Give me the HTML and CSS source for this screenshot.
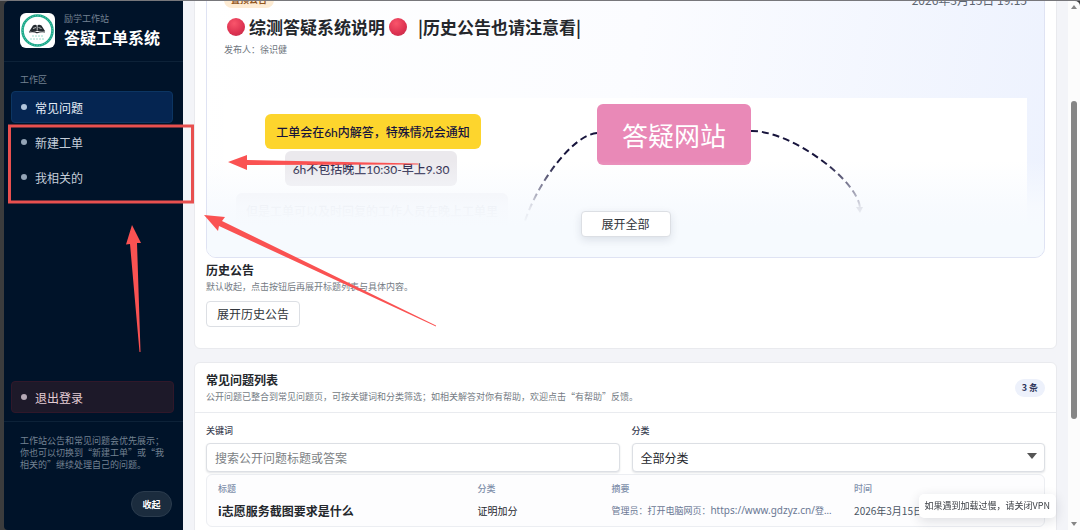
FILE: index.html
```html
<!DOCTYPE html>
<html lang="zh-CN">
<head>
<meta charset="utf-8">
<title>答疑工单系统</title>
<link rel="stylesheet" href="styles.css">
</head>
<body>
<div class="window">
  <aside class="sidebar">
    <header class="brand">
      <svg class="brand-logo" viewBox="0 0 35 35" aria-hidden="true">
        <rect width="35" height="35" rx="6" fill="#fff"/>
        <circle cx="17.5" cy="17.5" r="15" fill="none" stroke="#1ba889" stroke-width="2.6"/>
        <circle cx="17.5" cy="17.5" r="15" fill="none" stroke="#6fcdb8" stroke-width="1" stroke-dasharray="1 1.6"/>
        <path d="M9.500 18l3.500-5.500c1.500-1 3-1 4 0c1-1 3-1 4.500 0l3.500 5.500z" fill="#252b30"/>
        <path d="M17.200 10.500v7M13 15.500l3-1M18.500 14.500l3 1" stroke="#fff" stroke-width=".7"/>
        <path d="M9 19c3-.5 6-.5 8 .8c3-1.300 5-1.300 8-.8" fill="none" stroke="#252b30" stroke-width="1.200"/>
        <path d="M12 23h11M10 26h15" stroke="#9adccc" stroke-width="1" stroke-dasharray="2 1"/>
      </svg>
      <div>
        <p class="brand-sub">励学工作站</p>
        <h1 class="brand-title">答疑工单系统</h1>
      </div>
    </header>
    <p class="nav-caption">工作区</p>
    <nav class="nav">
      <a class="nav-item nav-item-active" href="#faq">常见问题</a>
      <a class="nav-item" href="#new">新建工单</a>
      <a class="nav-item" href="#mine">我相关的</a>
    </nav>
    <button class="nav-item logout" type="button">退出登录</button>
    <footer class="side-foot">
      <p class="side-note">工作站公告和常见问题会优先展示；你也可以切换到“新建工单”或“我相关的”继续处理自己的问题。</p>
      <button class="collapse" type="button">收起</button>
    </footer>
  </aside>

  <main class="main">
    <div class="content">
      <section class="card notices">
        <article class="notice">
          <div class="notice-top">
            <span class="badge">置顶公告</span>
            <time class="notice-time">2026年3月15日 19:15</time>
          </div>
          <h2 class="notice-title"><span class="dot"></span>综测答疑系统说明<span class="dot"></span><span class="title-rest">|历史公告也请注意看|</span></h2>
          <p class="byline">发布人：徐识健</p>
          <div class="map">
            <svg class="map-lines" width="804" height="159" viewBox="224 98 804 159" aria-hidden="true">
              <path d="M597 133C572 135 536 185 524 224"/>
              <path d="M751 131C790 130 858 180 860 208"/>
              <path class="map-tip" d="M856 207l4 6l3-6z"/>
            </svg>
            <span class="node node-yellow">工单会在6h内解答，特殊情况会通知</span>
            <span class="node node-gray">6h不包括晚上10:30-早上9.30</span>
            <span class="node node-faint">但是工单可以及时回复的工作人员在晚上工单里</span>
            <span class="node node-pink">答疑网站</span>
          </div>
          <div class="fade"><button class="btn btn-raised" type="button">展开全部</button></div>
        </article>
        <h3 class="section-title history-title">历史公告</h3>
        <p class="hint">默认收起，点击按钮后再展开标题列表与具体内容。</p>
        <button class="btn btn-history" type="button">展开历史公告</button>
      </section>

      <section class="card" id="faq">
        <header class="card-head">
          <div>
            <h3 class="section-title">常见问题列表</h3>
            <p class="hint">公开问题已整合到常见问题页，可按关键词和分类筛选；如相关解答对你有帮助，欢迎点击“有帮助”反馈。</p>
          </div>
          <span class="count">3 条</span>
        </header>
        <div class="card-body">
          <form class="filters">
            <div class="field">
              <label for="keyword">关键词</label>
              <input class="control" id="keyword" type="text" placeholder="搜索公开问题标题或答案">
            </div>
            <div class="field">
              <label for="category">分类</label>
              <select class="control select" id="category"><option>全部分类</option></select>
              <svg class="caret" width="10" height="6" viewBox="0 0 10 6" aria-hidden="true"><path d="M0 0h10L5 6z" fill="#555"/></svg>
            </div>
          </form>
          <div class="table-box">
            <table class="table">
              <thead>
                <tr><th class="col-title">标题</th><th class="col-cat">分类</th><th class="col-sum">摘要</th><th>时间</th></tr>
              </thead>
              <tbody>
                <tr>
                  <td class="cell-title">i志愿服务截图要求是什么</td>
                  <td>证明加分</td>
                  <td class="cell-sum">管理员：打开电脑网页：<span class="url">https://www.gdzyz.cn/</span>登...</td>
                  <td class="cell-time">2026年3月15日</td>
                </tr>
              </tbody>
            </table>
          </div>
        </div>
      </section>
    </div>
  </main>

  <div class="scrollbar" aria-hidden="true">
    <svg width="6" height="4" viewBox="0 0 6 4"><path d="M3 0l3 4H0z" fill="#858585"/></svg>
    <span class="thumb"></span>
    <svg class="scroll-down" width="6" height="4" viewBox="0 0 6 4"><path d="M0 0h6L3 4z" fill="#858585"/></svg>
  </div>
</div>

<div class="toast" role="status">如果遇到加载过慢，请关闭VPN</div>

<svg class="marks" width="1080" height="530" viewBox="0 0 1080 530" aria-hidden="true">
  <rect x="9.500" y="126" width="183" height="76" fill="none" stroke="#e8504f" stroke-width="3"/>
  <path d="M228 162L247 155V160L418 163.500V164.500L247 165V170z"/>
  <path d="M204 215L225 217L222 221L436 325.500V326.500L219 226L218 231z"/>
  <path d="M132 225L141 243L137 243L140.500 352H139.500L130 244L126 244.500z"/>
</svg>
</body>
</html>
```

FILE: styles.css
```css
* { box-sizing: border-box; }

body, h1, h2, h3, p { margin: 0; }

body {
  height: 100vh;
  overflow: hidden;
  background: #3b3c3d;
  color: #24272c;
  font-family: "Noto Sans CJK SC", "Noto Sans", sans-serif;
  font-size: 12px;
}

button, input, select { font: inherit; color: inherit; }

.window {
  display: flex;
  height: 100vh;
  padding: 1px 0 0 4px;
  background: linear-gradient(#77777b 1px, transparent 1px);
}

/* Sidebar */
.sidebar {
  display: flex;
  flex: none;
  flex-direction: column;
  width: 179px;
  background: #001329;
  border-radius: 5px 0 0 4px;
}

.brand {
  display: flex;
  gap: 9px;
  padding: 11px 16px 12px;
  border-bottom: 1px solid #0d2238;
}

.brand-logo { width: 35px; height: 35px; margin-top: 1px; }
.brand-sub { color: #748292; font-size: 9px; line-height: 14px; }
.brand-title { color: #fff; font-size: 16px; line-height: 23px; }

.nav-caption {
  padding: 11px 16px 4px;
  color: #748292;
  font-size: 9px;
  line-height: 14px;
}

.nav { display: grid; gap: 3px; padding: 0 10px 0 7px; }

.nav-item {
  display: flex;
  align-items: center;
  gap: 8px;
  height: 32px;
  padding: 0 9px;
  border: 1px solid transparent;
  border-radius: 4px;
  color: #c5ced9;
  font-size: 12px;
  text-decoration: none;
}

.nav-item::before {
  width: 6px;
  height: 6px;
  border-radius: 50%;
  background: #93a4b6;
  content: "";
}

.nav-item-active { background: #052551; border-color: #0c3562; color: #e5edf7; }
.nav-item-active::before { background: #b1c5dc; }

.logout {
  margin: auto 9px 8px 7px;
  background: #1d1929;
  border-color: #30182a;
  color: #e3ccd4;
}

.logout::before { background: #b5a8b5; }

.side-foot {
  display: flex;
  flex-direction: column;
  padding: 13px 11px 13px 16px;
  border-top: 1px solid #0d2238;
}

.side-note { max-width: 146px; color: #748292; font-size: 9px; line-height: 12px; }

.collapse {
  align-self: flex-end;
  width: 41px;
  height: 26px;
  margin-top: 20px;
  padding: 0;
  border: 1px solid #2b3c4e;
  border-radius: 13px;
  background: #1b2c3e;
  color: #fff;
  font-size: 9px;
  font-weight: 700;
}

/* Main column */
.main {
  flex: 1;
  min-width: 0;
  overflow: hidden;
  padding: 0 11px;
  background: #f3f4f8;
}

/* The list is scrolled down past its first rows */
.content { display: grid; gap: 13px; margin-top: -40px; }

.card { border: 1px solid #e9eaee; border-radius: 6px; background: #fff; }
.notices { padding: 11px 11px 21px; }

.notice {
  position: relative;
  overflow: hidden;
  padding: 18px 17px 0;
  border: 1px solid #dfe3f3;
  border-radius: 10px;
  background: linear-gradient(100deg, #fff 0%, #fbfcff 50%, #edf2fe 100%);
}

.notice-top { display: flex; justify-content: space-between; line-height: 16px; }

.badge {
  padding: 0 7px;
  border-radius: 8px;
  background: #fdebd3;
  color: #92551c;
  font-size: 9px;
  font-weight: 700;
}

.notice-time { color: #5d6570; font-size: 12px; }

.notice-title {
  display: flex;
  align-items: center;
  gap: 4px;
  margin: 7px 0 4px;
  padding-left: 3px;
  font-size: 17px;
  line-height: 24px;
}

.title-rest { margin-left: 7px; }

.dot {
  width: 18px;
  height: 18px;
  border-radius: 50%;
  background: radial-gradient(circle at 40% 30%, #f9556b, #dc3150 60%, #b9304b);
}

.byline { color: #6c737c; font-size: 9px; line-height: 14px; }

/* Mind map */
.map { position: relative; height: 159px; margin-top: 41px; background: #fff; }
.map-lines { position: absolute; top: 0; left: 0; }

.map-lines path {
  fill: none;
  stroke: #17143c;
  stroke-width: 2;
  stroke-dasharray: 7 4;
}

.map-lines .map-tip { fill: #17143c; stroke: none; }

.node {
  position: absolute;
  display: flex;
  align-items: center;
  justify-content: center;
  height: 35px;
  border-radius: 6px;
  color: #17143c;
  font-family: Lato, "Noto Sans CJK SC", sans-serif;
  font-size: 12px;
  font-weight: 500;
  white-space: nowrap;
}

.node-yellow { top: 16px; left: 41px; width: 216px; background: #fdd52d; }
.node-gray { top: 53px; left: 61px; width: 172px; background: #ebe9ed; }
.node-faint { top: 95px; left: 12px; width: 272px; background: #f1f1f5; color: #b4b6c2; }
.node-pink {
  top: 6px;
  left: 373px;
  width: 154px;
  height: 61px;
  background: #e989b7;
  color: #fff;
  font-size: 26px;
  font-weight: 400;
}

.fade {
  position: absolute;
  right: 0;
  bottom: 0;
  left: 0;
  display: flex;
  align-items: flex-end;
  justify-content: center;
  height: 96px;
  padding-bottom: 20px;
  background: linear-gradient(rgba(247, 250, 254, 0), rgba(247, 250, 254, .9) 48%, #f6fafe 68%);
}

.btn {
  height: 26px;
  padding: 0 10px;
  border: 1px solid #dcdfe4;
  border-radius: 4px;
  background: #fff;
  color: #30343a;
  font-size: 12px;
  line-height: 22px;
}

.btn-raised { min-width: 90px; box-shadow: 0 3px 8px rgba(30, 40, 70, .12); }
.btn-history { margin-top: 7px; }

.section-title { font-size: 12px; line-height: 18px; }
.history-title { margin-top: 3px; }
.hint { margin-top: 1px; color: #747b84; font-size: 9px; line-height: 14px; }

/* Question list */
.card-head {
  display: flex;
  align-items: center;
  justify-content: space-between;
  padding: 8px 11px;
  border-bottom: 1px solid #e9ebef;
}

.count {
  padding: 0 7px;
  border-radius: 9px;
  background: #edf1fb;
  color: #2d3459;
  font-size: 9px;
  font-weight: 700;
  line-height: 18px;
}

.card-body { padding: 11px 11px 20px; }
.filters { display: grid; grid-template-columns: 1fr 1fr; gap: 12px; }
.field { position: relative; }

.field label {
  display: block;
  margin-bottom: 5px;
  color: #3b4252;
  font-size: 9px;
  font-weight: 500;
  line-height: 14px;
}

.control {
  display: block;
  width: 100%;
  height: 29px;
  padding: 0 8px;
  border: 1px solid #dcdfe4;
  border-radius: 4px;
  background: #fff;
  box-shadow: 0 1px 2px rgba(20, 30, 50, .12);
}

.control::placeholder { color: #7c7f84; opacity: 1; }
.select { appearance: none; }

/* The arrow lies over the select box */
.caret { position: absolute; right: 8px; bottom: 13px; pointer-events: none; }

.table-box {
  margin-top: 2px;
  border: 1px solid #eceef2;
  border-radius: 6px;
  background: #fdfdfe;
}

.table { width: 100%; border-collapse: collapse; table-layout: fixed; }
.table th, .table td { padding: 6px 0 7px 11px; text-align: left; font-size: 10px; line-height: 16px; white-space: nowrap; }
.table th { padding-top: 7px; padding-bottom: 0; color: #8190ab; font-size: 9px; font-weight: 500; line-height: 14px; }
.col-title { width: 31%; }
.col-cat { width: 16%; }
.col-sum { width: 29%; }
.table .cell-title { font-size: 12px; font-weight: 700; }
.table .cell-sum { color: #6a7894; font-size: 9px; }
.url { font-family: "Noto Sans", sans-serif; font-size: 10px; }
.table .cell-time { color: #4b5563; }

/* Scroll bar */
.scrollbar {
  display: flex;
  flex: none;
  flex-direction: column;
  align-items: center;
  width: 12px;
  padding: 4px 0;
  background: #fcfcfc;
  border-top-right-radius: 5px;
}

.thumb { width: 6px; height: 61%; margin-top: 92px; border-radius: 3px; background: #858585; }
.scroll-down { margin-top: auto; }

.toast {
  position: fixed;
  right: 24px;
  bottom: 12px;
  padding: 5px 6px;
  border-radius: 5px;
  background: #fff;
  box-shadow: 0 3px 12px rgba(20, 30, 50, .14);
  color: #3d4046;
  font-size: 9px;
  line-height: 14px;
}

/* Hand-drawn pointers over the page */
.marks { position: fixed; top: 0; left: 0; pointer-events: none; }
.marks path { fill: #fa5252; }
```
